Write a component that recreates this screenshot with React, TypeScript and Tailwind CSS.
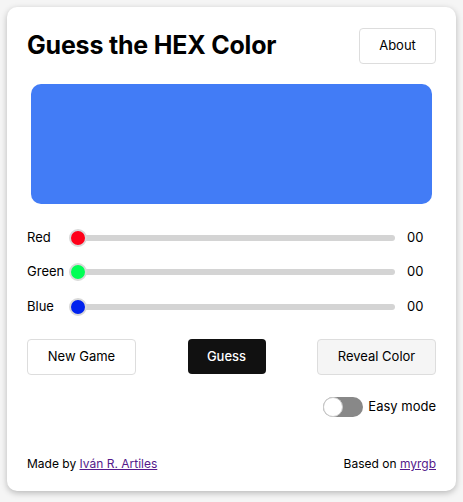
import { useState } from "react";

const channels = [
  { name: "Red", thumb: "bg-[#ff0019]" },
  { name: "Green", thumb: "bg-[#00ff55]" },
  { name: "Blue", thumb: "bg-[#0022ee]" },
];

function Slider({ name, thumb }: { name: string; thumb: string }) {
  return (
    <div className="flex items-center h-[20px]">
      <span className="w-[42px] text-[13px]">{name}</span>
      <div className="relative flex-1 h-[6px] rounded-full bg-[#d4d4d4] ml-[1px]">
        <span
          className={`absolute left-[-1px] top-1/2 -translate-y-1/2 w-[18px] h-[18px] rounded-full border-2 border-[#d9d9d9] ${thumb}`}
        />
      </div>
      <span className="ml-3 w-[29px] text-[13px]">00</span>
    </div>
  );
}

export default function App() {
  const [easy, setEasy] = useState(false);

  return (
    <div
      className="min-h-[502px] bg-[#f5f5f5] p-[7px] text-black"
      style={{ fontFamily: "Inter, 'Liberation Sans', sans-serif" }}
    >
      <div className="bg-white rounded-[10px] shadow-[0_2px_6px_rgba(0,0,0,0.25)] px-5 pt-5 pb-[18px] flex flex-col h-[484px]">
        <div className="flex items-center justify-between">
          <h1 className="text-[25px] font-bold tracking-[-0.2px]">Guess the HEX Color</h1>
          <button className="h-9 w-[77px] rounded border border-[#ddd] text-[13px]">About</button>
        </div>

        <div className="mx-1 mt-[19px] h-[120px] rounded-[10px] bg-[#427cf6]" />

        <div className="mt-[24px] flex flex-col gap-[14.5px]">
          {channels.map((c) => (
            <Slider key={c.name} name={c.name} thumb={c.thumb} />
          ))}
        </div>

        <div className="mt-[22px] flex items-center justify-between">
          <button className="h-9 w-[109px] rounded border border-[#ddd] text-[13px]">New Game</button>
          <button className="h-[35px] w-[78px] rounded bg-[#111] text-white text-[13px] font-medium">Guess</button>
          <button className="h-9 w-[119px] rounded border border-[#ddd] bg-[#f5f5f5] text-[13px]">
            Reveal Color
          </button>
        </div>

        <div className="mt-[22px] flex items-center justify-end gap-[5px]">
          <button
            onClick={() => setEasy(!easy)}
            className={`relative w-10 h-5 rounded-full ${easy ? "bg-[#111]" : "bg-[#888]"}`}
          >
            <span
              className={`absolute top-0 w-5 h-5 rounded-full bg-white border border-[#ccc] ${easy ? "left-5" : "left-0"}`}
            />
          </button>
          <span className="text-[13px]">Easy mode</span>
        </div>

        <div className="mt-auto flex justify-between text-[12px]">
          <span>
            Made by{" "}
            <a href="#" className="underline text-[#551a8b]">
              Iván R. Artiles
            </a>
          </span>
          <span>
            Based on{" "}
            <a href="#" className="underline text-[#551a8b]">
              myrgb
            </a>
          </span>
        </div>
      </div>
    </div>
  );
}
